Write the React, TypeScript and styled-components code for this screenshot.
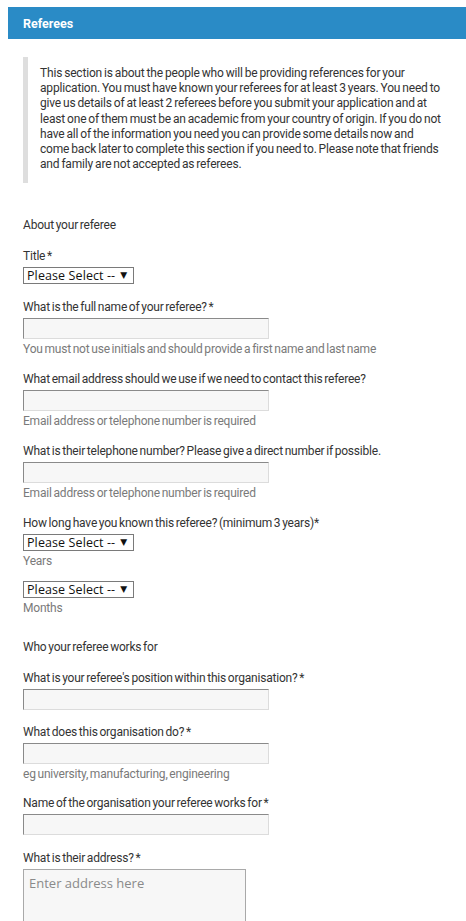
import React from "react";
import styled, { createGlobalStyle } from "styled-components";

const Global = createGlobalStyle`
  html, body { background: #ffffff; }
  body {
    margin: 7px 0 0 8px;
    font-family: Roboto, "Liberation Sans", Arial, sans-serif;
    font-size: 12px;
    color: #333333;
  }
  * { box-sizing: border-box; }
`;

const Page = styled.div`
  width: 458px;
`;

const Header = styled.div`
  height: 32px;
  background: #2a8bc6;
  display: flex;
  align-items: center;
  padding-left: 15px;
  color: #ffffff;
  font-weight: 700;
  font-size: 12.5px;
`;

const Body = styled.div`
  padding: 18px 15px 40px 15px;
`;

const Note = styled.div`
  border-left: 5px solid #dedede;
  padding: 9px 8px 11px 12px;
  line-height: 15.2px;
  letter-spacing: -0.18px;
  word-spacing: -0.8px;
  color: #333;
`;

const SectionTitle = styled.div<{ $gap: number }>`
  margin-top: ${(p) => p.$gap}px;
  line-height: 16px;
  letter-spacing: -0.2px;
  word-spacing: -1px;
`;

const Field = styled.div<{ $gap?: number }>`
  margin-top: ${(p) => p.$gap ?? 14}px;
  display: flex;
  flex-direction: column;
  align-items: flex-start;
`;

const Label = styled.label`
  line-height: 16px;
  margin-bottom: 3px;
  letter-spacing: -0.2px;
  word-spacing: -1px;
`;

const Help = styled.div<{ $gap?: number }>`
  line-height: 16px;
  margin-top: ${(p) => p.$gap ?? 2}px;
  color: #7a7a7a;
  letter-spacing: -0.2px;
  word-spacing: -1px;
`;

const TextInput = styled.input`
  width: 246px;
  height: 21px;
  background: #f7f7f7;
  border-style: solid;
  border-width: 1px;
  border-color: #8a8a8a #dcdcdc #dcdcdc #8a8a8a;
  padding: 0 4px;
  margin: 0;
  outline: none;
`;

const SelectBox = styled.div`
  width: 111px;
  height: 17px;
  border: 1px solid #7a7a7a;
  background: #ffffff;
  display: flex;
  align-items: center;
  gap: 5px;
  padding: 0 3px 0 3px;
  white-space: nowrap;
  overflow: hidden;
  font-family: "Open Sans", "DejaVu Sans", sans-serif;
  font-size: 12.5px;
  color: #111;
  letter-spacing: 0.1px;
`;

const Arrow = styled.span`
  font-size: 9px;
  color: #111;
  margin-top: -3px;
`;

const TextArea = styled.textarea`
  width: 223px;
  height: 70px;
  background: #f7f7f7;
  border: 1px solid #a9a9a9;
  padding: 4px 5px;
  margin: 0;
  resize: none;
  font-family: "Open Sans", "DejaVu Sans", sans-serif;
  font-size: 13px;
  outline: none;
  &::placeholder {
    color: #8a8a8a;
  }
`;

const Select = () => (
  <SelectBox>
    <span>Please Select --</span>
    <Arrow>▼</Arrow>
  </SelectBox>
);

export default function App() {
  return (
    <Page>
      <Global />
      <Header>Referees</Header>
      <Body>
        <Note>
          This section is about the people who will be providing references for your
          application. You must have known your referees for at least 3 years. You need to
          give us details of at least 2 referees before you submit your application and at
          least one of them must be an academic from your country of origin. If you do not
          have all of the information you need you can provide some details now and come
          back later to complete this section if you need to. Please note that friends and
          family are not accepted as referees.
        </Note>

        <SectionTitle $gap={34}>About your referee</SectionTitle>

        <Field $gap={15}>
          <Label>Title *</Label>
          <Select />
        </Field>

        <Field $gap={15}>
          <Label>What is the full name of your referee? *</Label>
          <TextInput />
          <Help>You must not use initials and should provide a first name and last name</Help>
        </Field>

        <Field>
          <Label>What email address should we use if we need to contact this referee?</Label>
          <TextInput />
          <Help>Email address or telephone number is required</Help>
        </Field>

        <Field>
          <Label>What is their telephone number? Please give a direct number if possible.</Label>
          <TextInput />
          <Help>Email address or telephone number is required</Help>
        </Field>

        <Field>
          <Label>How long have you known this referee? (minimum 3 years)*</Label>
          <Select />
          <Help>Years</Help>
        </Field>

        <Field $gap={12}>
          <Select />
          <Help>Months</Help>
        </Field>

        <SectionTitle $gap={23}>Who your referee works for</SectionTitle>

        <Field $gap={15}>
          <Label>What is your referee's position within this organisation? *</Label>
          <TextInput />
        </Field>

        <Field>
          <Label>What does this organisation do? *</Label>
          <TextInput />
          <Help>eg university, manufacturing, engineering</Help>
        </Field>

        <Field $gap={13}>
          <Label>Name of the organisation your referee works for *</Label>
          <TextInput />
        </Field>

        <Field $gap={15}>
          <Label>What is their address? *</Label>
          <TextArea placeholder="Enter address here" />
        </Field>
      </Body>
    </Page>
  );
}
